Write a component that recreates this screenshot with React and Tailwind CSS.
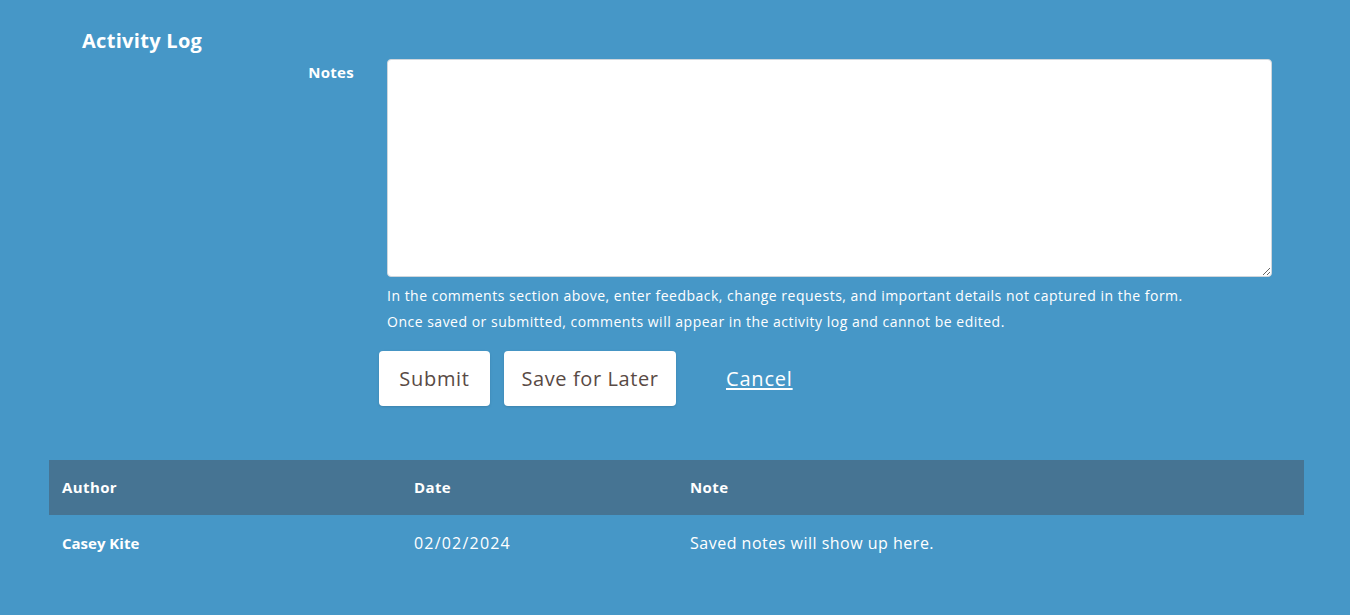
export default function App() {
  const font = { fontFamily: '"Open Sans", "Noto Sans", sans-serif' };
  return (
    <div className="w-[1350px] h-[615px] bg-[#4697c7] text-white overflow-hidden" style={font}>
      <div className="pt-[28px] pl-[82px]">
        <h2 className="text-[20px] leading-[26px] font-bold tracking-[0.3px]">Activity Log</h2>
      </div>
      <div className="flex mt-[5px]">
        <div className="w-[354px] text-right pt-[1px]">
          <span className="text-[15px] leading-[18px] font-bold tracking-[0.3px]">Notes</span>
        </div>
        <div className="ml-[33px] flex flex-col">
          <textarea className="w-[885px] h-[218px] bg-white rounded-[4px] border border-[#cfd6dc] outline-none"></textarea>
          <p className="mt-[6px] text-[14px] leading-[26px] tracking-[0.5px] whitespace-nowrap">
            In the comments section above, enter feedback, change requests, and important details not captured in the form.
          </p>
          <p className="text-[14px] leading-[26px] tracking-[0.5px] whitespace-nowrap">
            Once saved or submitted, comments will appear in the activity log and cannot be edited.
          </p>
        </div>
      </div>
      <div className="flex items-center pl-[379px] mt-[16px] gap-[14px]">
        <button className="h-[55px] w-[111px] bg-white rounded-[4px] text-[#594a45] text-[20px] tracking-[0.7px] shadow-sm">Submit</button>
        <button className="h-[55px] w-[172px] bg-white rounded-[4px] text-[#594a45] text-[20px] tracking-[0.6px] shadow-sm">Save for Later</button>
        <a className="ml-[36px] text-[20px] tracking-[0.8px] underline underline-offset-2 text-white">Cancel</a>
      </div>
      <div className="ml-[49px] mr-[46px] mt-[54px]">
        <div className="flex h-[55px] items-center bg-[#467493] text-[15px] font-bold tracking-[0.4px]">
          <div className="w-[365px] pl-[13px]">Author</div>
          <div className="w-[276px]">Date</div>
          <div>Note</div>
        </div>
        <div className="flex h-[56px] items-center text-[16px]">
          <div className="w-[365px] pl-[13px] font-bold text-[15px]">Casey Kite</div>
          <div className="w-[276px] tracking-[1.2px]">02/02/2024</div>
          <div className="tracking-[0.5px]">Saved notes will show up here.</div>
        </div>
      </div>
    </div>
  );
}
